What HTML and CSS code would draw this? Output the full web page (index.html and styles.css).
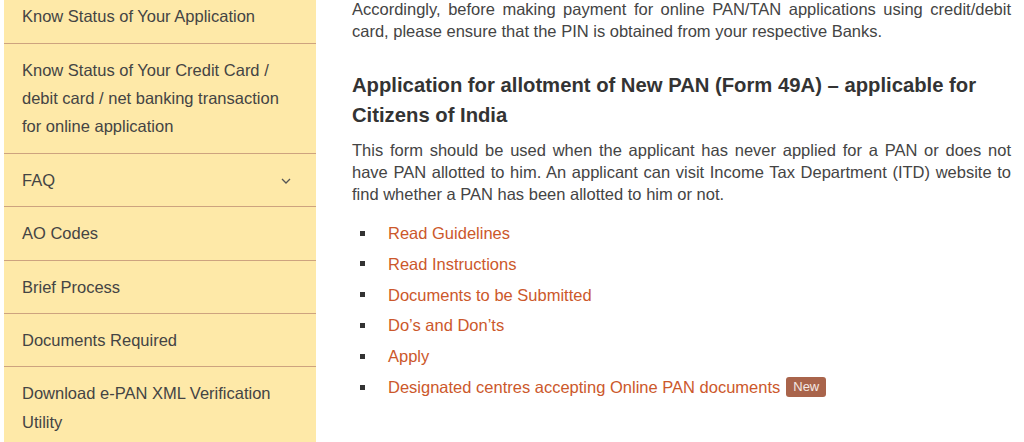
FILE: index.html
```html
<!DOCTYPE html>
<html lang="en">
<head>
<meta charset="utf-8">
<title>Online PAN Application</title>
<link rel="stylesheet" href="styles.css">
</head>
<body>
<div class="page">
  <aside class="sidebar">
    <ul class="side-menu">
      <li class="side-item">Know Status of Your Application</li>
      <li class="side-item">Know Status of Your Credit Card / debit card / net banking transaction for online application</li>
      <li class="side-item has-sub"><span>FAQ</span>
        <svg class="chev" width="10" height="6" viewBox="0 0 10 6"><polyline points="1,1 5,5 9,1" fill="none" stroke="#555" stroke-width="1.3"/></svg>
      </li>
      <li class="side-item">AO Codes</li>
      <li class="side-item">Brief Process</li>
      <li class="side-item">Documents Required</li>
      <li class="side-item">Download e-PAN XML Verification Utility</li>
    </ul>
  </aside>
  <main class="content">
    <p class="intro">Accordingly, before making payment for online PAN/TAN applications using credit/debit card, please ensure that the PIN is obtained from your respective Banks.</p>
    <h2 class="section-title">Application for allotment of New PAN (Form 49A) – applicable for Citizens of India</h2>
    <p class="desc">This form should be used when the applicant has never applied for a PAN or does not have PAN allotted to him. An applicant can visit Income Tax Department (ITD) website to find whether a PAN has been allotted to him or not.</p>
    <ul class="links">
      <li><a href="#">Read Guidelines</a></li>
      <li><a href="#">Read Instructions</a></li>
      <li><a href="#">Documents to be Submitted</a></li>
      <li><a href="#">Do’s and Don’ts</a></li>
      <li><a href="#">Apply</a></li>
      <li><a href="#">Designated centres accepting Online PAN documents</a><span class="badge">New</span></li>
    </ul>
  </main>
</div>
</body>
</html>
```

FILE: styles.css
```css
html, body {
  margin: 0;
  padding: 0;
  background: #fff;
  overflow: hidden;
}
body {
  font-family: "Liberation Sans", Arial, sans-serif;
  color: #444;
}
.page {
  display: grid;
  grid-template-columns: 312px 1fr;
  column-gap: 36px;
  margin-top: -9.8px;
  padding-left: 4px;
  padding-right: 13px;
}
.sidebar {
  background: #fee9a8;
}
.side-menu {
  list-style: none;
  margin: 0;
  padding: 0;
}
.side-item {
  font-size: 16.5px;
  line-height: 28.4px;
  padding: 12px 18px;
  border-bottom: 1px solid #cda37f;
  color: #444;
}
.has-sub {
  display: flex;
  justify-content: space-between;
  align-items: center;
}
.chev {
  margin-right: 7px;
  margin-top: 2px;
}
.content {
  padding-top: 8.05px;
}
.intro, .desc {
  margin: 0;
  font-size: 16.5px;
  line-height: 22px;
  text-align: justify;
  color: #444;
}
.section-title {
  margin: 27.5px 0 9px;
  font-size: 20.25px;
  line-height: 30px;
  font-weight: bold;
  color: #333;
}
.links {
  list-style: none;
  margin: 13px 0 0;
  padding: 0 0 0 8px;
}
.links li {
  display: flex;
  align-items: center;
  font-size: 16.5px;
  line-height: 22px;
  padding: 4.4px 0;
}
.links li::before {
  content: "";
  width: 5px;
  height: 5px;
  background: #333;
  margin-right: 23px;
  flex: none;
}
.links a {
  color: #cc582b;
  text-decoration: none;
}
.badge {
  margin-left: 6px;
  background: #a9644b;
  color: #f4e9e4;
  font-size: 13px;
  line-height: 20px;
  padding: 0 7px;
  border-radius: 3px;
}
```
